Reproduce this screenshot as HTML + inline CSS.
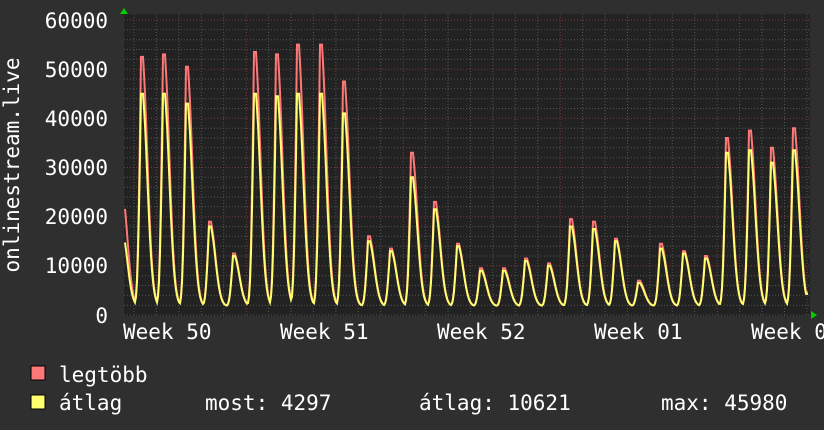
<!DOCTYPE html>
<html><head><meta charset="utf-8"><style>
html,body{margin:0;padding:0;background:#2f2f2f;width:824px;height:430px;overflow:hidden}
svg{display:block}
text{font-family:"DejaVu Sans Mono","Liberation Mono",monospace;fill:#fff;font-size:21px}
</style></head><body>
<svg id="g" width="824" height="430" viewBox="0 0 824 430">
<rect x="0" y="0" width="824" height="430" fill="#2f2f2f"/>
<rect x="124" y="14" width="686" height="302" fill="#222"/>
<g id="grid"></g>
<path id="red" fill="none" stroke="#ff7878" stroke-width="2"/>
<path id="yel" fill="none" stroke="#ffff70" stroke-width="2"/>
<polygon points="120,14 128,14 124,8" fill="#0c0"/>
<polygon points="811,311 811,319 817,315" fill="#0c0"/>
<text x="108" y="28" text-anchor="end">60000</text>
<text x="108" y="77" text-anchor="end">50000</text>
<text x="108" y="126" text-anchor="end">40000</text>
<text x="108" y="175" text-anchor="end">30000</text>
<text x="108" y="224" text-anchor="end">20000</text>
<text x="108" y="273" text-anchor="end">10000</text>
<text x="108" y="323" text-anchor="end">0</text>
<text transform="translate(19,165) rotate(-90)" text-anchor="middle">onlinestream.live</text>
<text x="123" y="339">Week 50</text>
<text x="280" y="339">Week 51</text>
<text x="437" y="339">Week 52</text>
<text x="594" y="339">Week 01</text>
<text x="751" y="339">Week 0</text>
<rect x="31" y="366" width="14" height="14" fill="#ff7878" stroke="#000" stroke-width="1"/>
<text x="59" y="382">legtöbb</text>
<rect x="31" y="395" width="14" height="14" fill="#ffff70" stroke="#000" stroke-width="1"/>
<text x="59" y="410">átlag</text>
<text x="205" y="410">most: 4297</text>
<text x="419" y="410">átlag: 10621</text>
<text x="661" y="410">max: 45980</text>
</svg>
<script>
var g=document.getElementById("grid"),h="";
function Y(v){return 315-v*295/60000;}
for(var v=0;v<=60000;v+=2000){var y=Y(v).toFixed(1);var maj=v%10000==0&&v>0;
h+='<line x1="124" x2="810" y1="'+y+'" y2="'+y+'" stroke="'+(maj?'#7a3a3a':'#555')+'" stroke-dasharray="1,2"/>';}
for(var x=134;x<810;x+=22.43){var m=Math.abs(((x-246)/157)-Math.round((x-246)/157))<0.05;
h+='<line y1="14" y2="316" x1="'+x.toFixed(1)+'" x2="'+x.toFixed(1)+'" stroke="'+(m?'#7a3a3a':'#555')+'" stroke-dasharray="1,2"/>';}
g.innerHTML=h;
var P=[[122,25000,17000],[142,52500,45000],[164,53000,45000],[187,50500,43000],[210,19000,18000],[234,12500,12000],[255,53500,45000],[277,53000,44500],[298,55000,45000],[321,55000,45000],[344,47500,41000],[369,16000,15000],[391,13500,13000],[412,33000,28000],[435,23000,21500],[458,14500,14000],[481,9500,9000],[504,9500,9000],[526,11500,11000],[549,10500,10000],[571,19500,18000],[594,19000,17500],[616,15500,15000],[639,7000,6500],[661,14500,13500],[684,13000,12500],[706,12000,11500],[727,36000,33000],[750,37500,33500],[772,34000,31000],[794,38000,33500]];
function f(x,k){var m=1800;for(var i=0;i<P.length;i++){var d=x-P[i][0];var w=d<0?3.4:7.5;if(Math.abs(d)<1.5)d=0;var e=Math.exp(-Math.pow(d/w,2));var val=1800+(P[i][k]-1800)*e;if(val>m)m=val;}return m;}
var r="",yl="";
for(var x=125;x<=808;x++){var a=f(x,1),b=f(x,2);if(x>=804){a=Math.max(4600,a);b=Math.max(4300,b);}
r+=(x==125?"M":"L")+x+","+Y(a).toFixed(1);yl+=(x==125?"M":"L")+x+","+Y(b).toFixed(1);}
document.getElementById("red").setAttribute("d",r);
document.getElementById("yel").setAttribute("d",yl);
</script>
</body></html>
